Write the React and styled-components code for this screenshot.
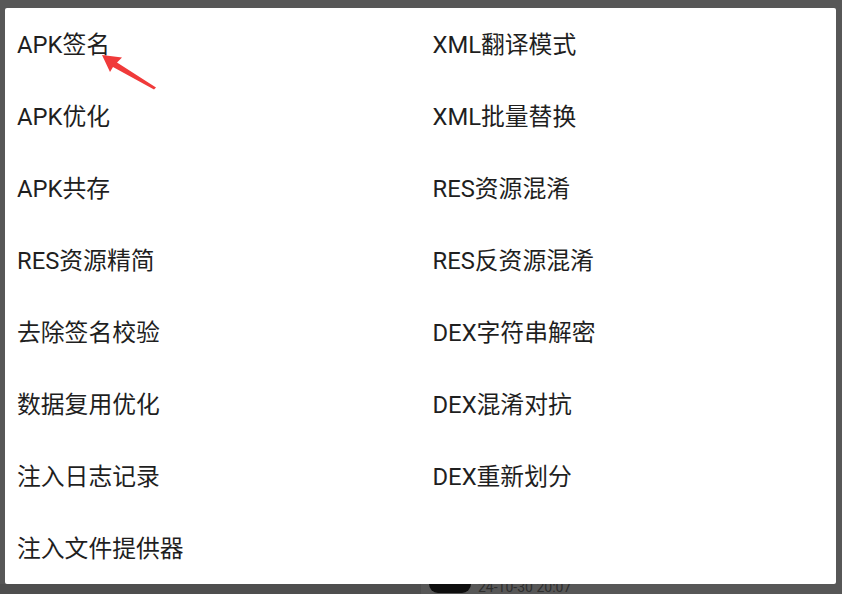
import React from 'react'
import styled, { createGlobalStyle } from 'styled-components'

const GlobalStyle = createGlobalStyle`
  html, body {
    margin: 0;
    padding: 0;
    background: #575757;
  }
  body {
    font-family: Roboto, "Noto Sans CJK SC", sans-serif;
  }
`

const leftItems = [
  'APK签名',
  'APK优化',
  'APK共存',
  'RES资源精简',
  '去除签名校验',
  '数据复用优化',
  '注入日志记录',
  '注入文件提供器',
]

const rightItems = [
  'XML翻译模式',
  'XML批量替换',
  'RES资源混淆',
  'RES反资源混淆',
  'DEX字符串解密',
  'DEX混淆对抗',
  'DEX重新划分',
]

export default function App() {
  return (
    <Screen>
      <GlobalStyle />
      <Dialog>
        <Column>
          {leftItems.map((t) => (
            <Item key={t}>{t}</Item>
          ))}
        </Column>
        <Column>
          {rightItems.map((t) => (
            <Item key={t}>{t}</Item>
          ))}
        </Column>
        <Arrow viewBox="0 0 842 594" width="842" height="594">
          <polygon
            points="102,55 122,57.5 117,62.5 156,87.5 154,89.5 113,67 110,72"
            fill="#f03a3a"
          />
        </Arrow>
      </Dialog>
      <Behind>
        <BehindLeft />
        <BehindRight>
          <Thumb />
          <Time>24-10-30 20:07</Time>
        </BehindRight>
      </Behind>
    </Screen>
  )
}

const Screen = styled.div`
  position: relative;
  height: 594px;
  display: flex;
  flex-direction: column;
  overflow: hidden;
`

const Dialog = styled.div`
  margin: 8px 6px 0 5px;
  background: #fff;
  border-radius: 2px;
  display: grid;
  grid-template-columns: 1fr 1fr;
`

const Column = styled.div`
  display: flex;
  flex-direction: column;
`

const Item = styled.div`
  box-sizing: border-box;
  height: 72px;
  display: flex;
  align-items: center;
  padding: 0 0 3px 12px;
  font-size: 23.8px;
  color: #1f1f1f;
  white-space: nowrap;
`

const Arrow = styled.svg`
  position: absolute;
  left: 0;
  top: 0;
  pointer-events: none;
`

const Behind = styled.div`
  flex: 1;
  display: grid;
  grid-template-columns: 421px 1fr;
  overflow: hidden;
`

const BehindLeft = styled.div`
  background: #4e4e4e;
`

const BehindRight = styled.div`
  display: flex;
  align-items: flex-end;
  gap: 7px;
  padding-left: 8px;
  padding-bottom: 1px;
  overflow: hidden;
`

const Thumb = styled.div`
  flex: none;
  width: 42px;
  height: 24px;
  border-radius: 9px;
  background: #0e0e0e;
`

const Time = styled.div`
  font-size: 14px;
  line-height: 12px;
  color: #2e2e2e;
  white-space: nowrap;
`
